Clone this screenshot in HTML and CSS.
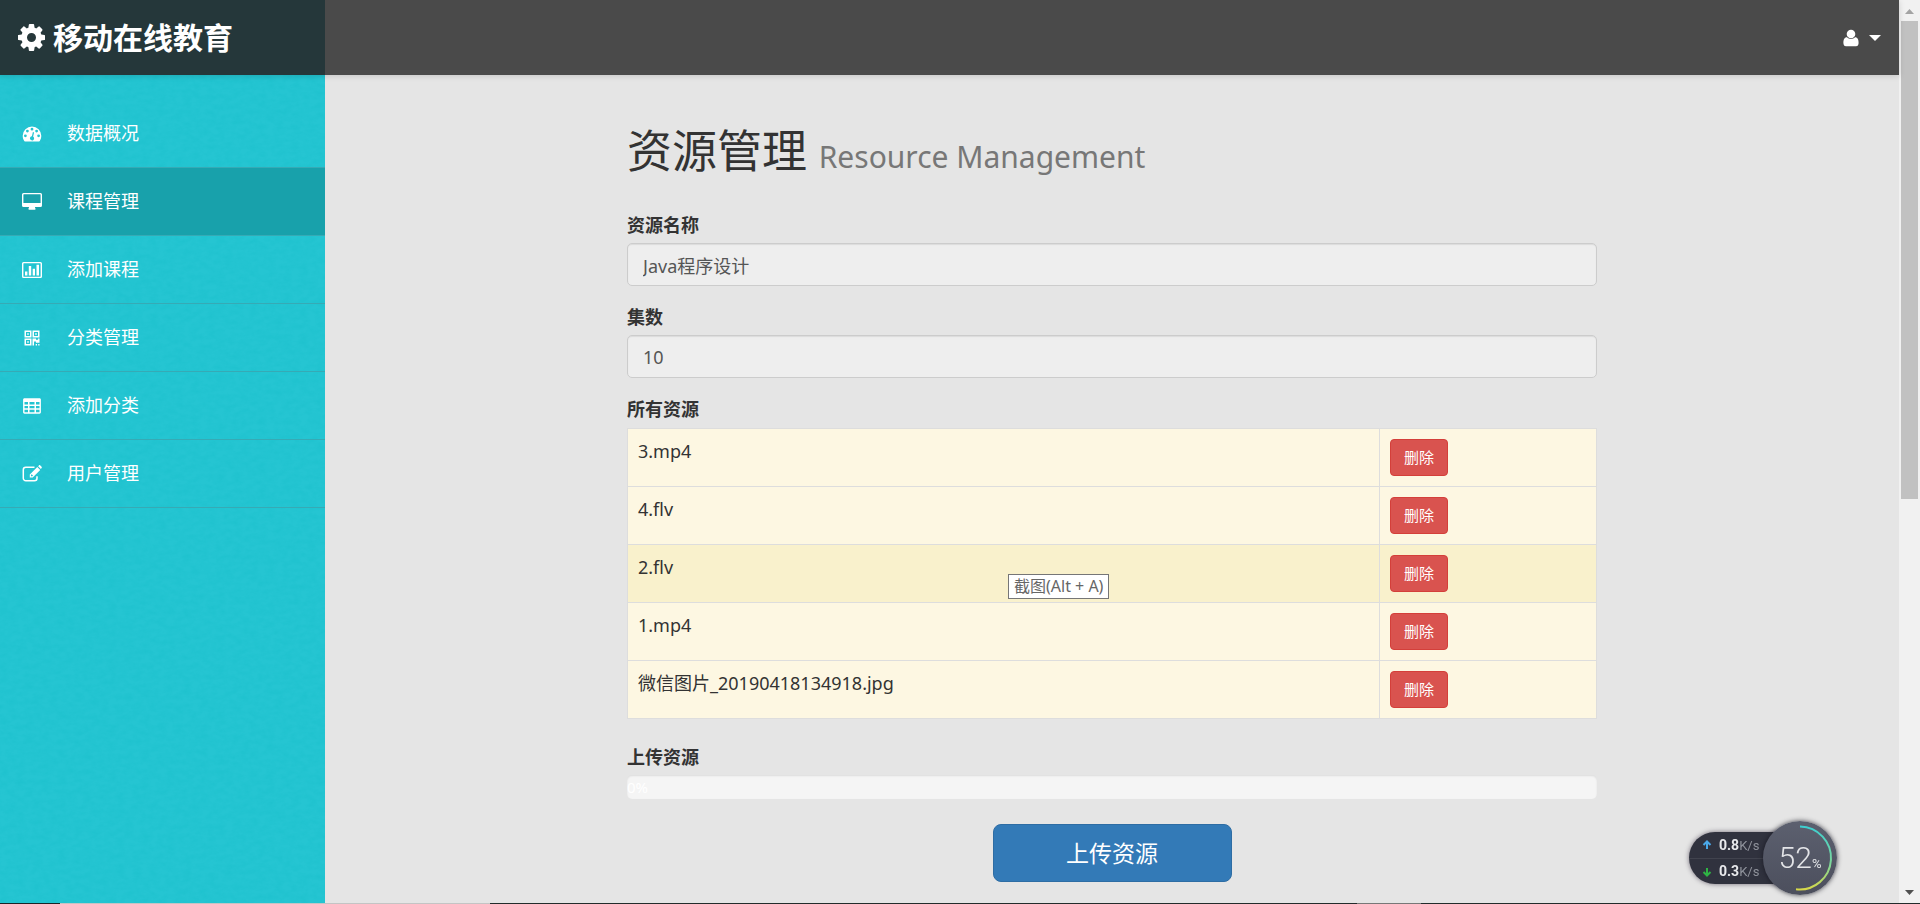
FILE: index.html
```html
<!DOCTYPE html>
<html lang="zh-CN">
<head>
<meta charset="utf-8">
<title>资源管理</title>
<link rel="stylesheet" href="styles.css">
</head>
<body>
<div class="window">
  <div class="app">
    <header class="topbar">
      <a class="brand" href="#">
        <svg class="brand-icon" viewBox="0 0 1536 1536" aria-hidden="true"><path transform="translate(0 -128)" d="M1024 896q0-106-75-181t-181-75-181 75-75 181 75 181 181 75 181-75 75-181zm512-109v222q0 12-8 23t-20 13l-185 28q-19 54-39 91 35 50 107 138 10 12 10 25t-9 23q-27 37-99 108t-94 71q-12 0-26-9l-138-108q-44 23-91 38-16 136-29 186-7 28-36 28h-222q-14 0-24.500-8.500t-11.500-21.500l-28-184q-49-16-90-37l-141 107q-10 9-25 9-14 0-25-11-126-114-165-168-7-10-7-23 0-12 8-23 15-21 51-66.500t54-70.500q-27-50-41-99l-183-27q-13-2-21-12.500t-8-23.500v-222q0-12 8-23t19-13l186-28q14-46 39-92-40-57-107-138-10-12-10-24 0-10 9-23 26-36 98.500-107.500t94.500-71.500q13 0 26 10l138 107q44-23 91-38 16-136 29-186 7-28 36-28h222q14 0 24.500 8.500t11.500 21.500l28 184q49 16 90 37l142-107q9-9 24-9 13 0 25 10 129 119 165 170 7 8 7 22 0 12-8 23-15 21-51 66.500t-54 70.500q26 50 41 98l183 28q13 2 21 12.500t8 23.500z"/></svg>
        <span>移动在线教育</span>
      </a>
      <button class="user-menu" type="button" aria-label="用户菜单">
        <svg class="user-icon" viewBox="0 0 16 18" aria-hidden="true"><circle cx="8" cy="5" r="4.300"/><path d="M4 8.300C1.200 8.300.400 11 .400 14c0 2 1 3.300 2.600 3.300h10c1.600 0 2.600-1.300 2.600-3.300 0-3-.800-5.700-3.600-5.700-1 1-2.400 1.700-4 1.700s-3-.700-4-1.700z"/></svg>
        <svg class="caret" viewBox="0 0 12 6" aria-hidden="true"><path d="M0 0h12L6 6z"/></svg>
      </button>
    </header>
    <div class="body">
      <nav class="sidebar">
        <svg class="texture" aria-hidden="true"><filter id="grain" x="0" y="0" width="100%" height="100%"><feTurbulence type="fractalNoise" baseFrequency="0.12 0.2" numOctaves="3" seed="4"/><feColorMatrix values="0 0 0 0 0  0 0 0 0 .45  0 0 0 0 .5  .9 0 0 0 -.3"/></filter><rect width="100%" height="100%" filter="url(#grain)"/></svg>
        <ul class="menu">
          <li><a class="item" href="#"><svg class="icon" viewBox="0 0 20 20"><path fill-rule="evenodd" d="M10 2.500A9.300 9.300 0 0 0 .700 11.800c0 1.900.500 3.500 1.400 5 .200.400.500.600.900.600h14c.400 0 .700-.200.900-.600.900-1.500 1.400-3.100 1.400-5A9.300 9.300 0 0 0 10 2.500zM10 3.800a1.400 1.400 0 1 1 0 2.800 1.400 1.400 0 0 1 0-2.800zM5.400 5.700a1.400 1.400 0 1 1 0 2.800 1.400 1.400 0 0 1 0-2.800zM14.600 5.700a1.400 1.400 0 1 1 0 2.800 1.400 1.400 0 0 1 0-2.800zM3.400 10.400a1.400 1.400 0 1 1 0 2.800 1.400 1.400 0 0 1 0-2.800zM16.600 10.400a1.400 1.400 0 1 1 0 2.800 1.400 1.400 0 0 1 0-2.800zM10.900 8.100l1.200.300-1 4.100a2.100 2.100 0 1 1-1.200-.300z"/></svg><span>数据概况</span></a></li>
          <li><a class="item active" href="#" aria-current="page"><svg class="icon" viewBox="0 0 20 20"><path fill-rule="evenodd" d="M1.500 1h17A1.500 1.500 0 0 1 20 2.500v11a1.500 1.500 0 0 1-1.500 1.500H13c0 1 .600 1.500.600 2s-.300.700-.700.700H7.100c-.400 0-.700-.200-.700-.700s.600-1 .600-2H1.500A1.500 1.500 0 0 1 0 13.500v-11A1.500 1.500 0 0 1 1.500 1zm.300 1.300a.400.400 0 0 0-.400.400v8.200h17.200V2.700a.400.400 0 0 0-.400-.400z"/></svg><span>课程管理</span></a></li>
          <li><a class="item" href="#"><svg class="icon" viewBox="0 0 20 20"><path fill-rule="evenodd" d="M1.500 2h17A1.500 1.500 0 0 1 20 3.500v13a1.500 1.500 0 0 1-1.500 1.500h-17A1.500 1.500 0 0 1 0 16.500v-13A1.500 1.500 0 0 1 1.500 2zm.300 1.300a.400.400 0 0 0-.400.400v12.600c0 .200.200.400.400.400h16.400c.200 0 .400-.200.400-.400V3.700a.400.400 0 0 0-.400-.400zM3 11.500h2.400v4H3zM6.800 6h2.400v9.500H6.800zM10.700 8.700H13v6.800h-2.300zM14.500 4.700H17v10.800h-2.500z"/></svg><span>添加课程</span></a></li>
          <li><a class="item" href="#"><svg class="icon" viewBox="0 0 20 20"><path fill-rule="evenodd" d="M2.500 2.500h7v7h-7zM4 4v4h4V4zM5.200 5.200h1.600v1.600H5.200zM10.500 2.500h7v7h-7zM12 4v4h4V4zM13.200 5.200h1.600v1.600h-1.600zM2.500 10.500h7v7h-7zM4 12v4h4v-4zM5.200 13.200h1.600v1.600H5.200zM10.500 10.500H14v1.300h2v-1.300h1.500v4.200H14v-1.300h-2v4.100h-1.500zM13.700 16.100H15v1.400h-1.300zM16.200 16.100h1.300v1.400h-1.300z"/></svg><span>分类管理</span></a></li>
          <li><a class="item" href="#"><svg class="icon" viewBox="0 0 20 20"><path fill-rule="evenodd" d="M2.500 2.300h15c.800 0 1.400.600 1.400 1.400v12.600c0 .800-.600 1.400-1.400 1.400h-15c-.800 0-1.400-.600-1.400-1.400V3.700c0-.800.600-1.400 1.400-1.400zM2.500 6v2.500H6V6zM7.500 6v2.500h5V6zM14 6v2.500h3.500V6zM2.500 9.900v2.400H6V9.900zM7.500 9.900v2.400h5V9.900zM14 9.900v2.400h3.500V9.900zM2.500 13.700v2.500H6v-2.500zM7.500 13.700v2.500h5v-2.500zM14 13.700v2.500h3.500v-2.500z"/></svg><span>添加分类</span></a></li>
          <li><a class="item" href="#"><svg class="icon" viewBox="0 0 20 20"><path fill="none" stroke="currentColor" stroke-width="1.500" d="M12.500 3.300H3.800A2.500 2.500 0 0 0 1.300 5.800v8.400a2.500 2.500 0 0 0 2.500 2.500h8.700a2.500 2.500 0 0 0 2.500-2.500v-2"/><path fill-rule="evenodd" d="M15.300 3l2.900 2.900-7.500 7.500H7.800v-2.900zM9 11v1.300h1.300l.700-.700L9.700 10.300zM16.100 2.200l.800-.800c.400-.400 1-.400 1.400 0l1.300 1.300c.400.400.400 1 0 1.400l-.700.800z"/></svg><span>用户管理</span></a></li>
        </ul>
      </nav>
      <main class="content">
        <form class="panel">
          <h1 class="title">资源管理 <small>Resource Management</small></h1>
          <div class="field">
            <label for="name">资源名称</label>
            <input id="name" class="control" type="text" value="Java程序设计" readonly>
          </div>
          <div class="field">
            <label for="count">集数</label>
            <input id="count" class="control" type="text" value="10" readonly>
          </div>
          <div class="field files">
            <span class="caption" id="files-label">所有资源</span>
            <table class="table" aria-labelledby="files-label">
              <tbody>
                <tr><td>3.mp4</td><td class="action"><button class="delete" type="button">删除</button></td></tr>
                <tr><td>4.flv</td><td class="action"><button class="delete" type="button">删除</button></td></tr>
                <tr class="hovered"><td>2.flv</td><td class="action"><button class="delete" type="button">删除</button></td></tr>
                <tr><td>1.mp4</td><td class="action"><button class="delete" type="button">删除</button></td></tr>
                <tr><td>微信图片_20190418134918.jpg</td><td class="action"><button class="delete" type="button">删除</button></td></tr>
              </tbody>
            </table>
          </div>
          <div class="field upload">
            <span class="caption" id="upload-label">上传资源</span>
            <div class="progress" role="progressbar" aria-valuenow="0" aria-valuemin="0" aria-valuemax="100" aria-labelledby="upload-label">0%</div>
          </div>
          <button class="submit" type="button">上传资源</button>
        </form>
      </main>
    </div>
  </div>
  <div class="scrollbar" aria-hidden="true">
    <svg class="arrow" viewBox="0 0 21 21"><path fill="#a3a3a3" d="M6 14l4.500-5L15 14z"/></svg>
    <div class="track"><div class="thumb"></div></div>
    <svg class="arrow" viewBox="0 0 21 21"><path fill="#505050" d="M6 7h9l-4.500 5z"/></svg>
  </div>
</div>
<div class="tooltip" role="tooltip">截图(Alt + A)</div>
<div class="monitor">
  <div class="rates">
    <div class="rate"><svg class="rate-icon up" viewBox="0 0 10 10"><path d="M5 1v8M1.500 5L5 1.500 8.500 5"/></svg><b>0.8</b><span>K/s</span></div>
    <div class="rate"><svg class="rate-icon down" viewBox="0 0 10 10"><path d="M5 1v8M1.500 5L5 8.500 8.500 5"/></svg><b>0.3</b><span>K/s</span></div>
  </div>
  <div class="gauge">
    <svg class="ring" viewBox="0 0 74 74" aria-hidden="true"><defs><linearGradient id="arc" x1="0" y1="0" x2="0" y2="1"><stop offset="0" stop-color="#3dcfd0"/><stop offset=".6" stop-color="#7fd79a"/><stop offset="1" stop-color="#d6d84a"/></linearGradient></defs><path fill="none" stroke="url(#arc)" stroke-width="2" d="M37 5.500a31.500 31.500 0 1 1-4 62.800"/></svg>
    <span class="value">52</span><span class="percent">%</span>
  </div>
</div>
<div class="edge" aria-hidden="true"></div>
</body>
</html>
```
FILE: styles.css
```css
* {
  box-sizing: border-box;
}

body {
  margin: 0;
  overflow: hidden;
  background: #e5e5e5;
  color: #333;
  font-family: "Noto Sans", "Noto Sans CJK SC", sans-serif;
  font-size: 18px;
  line-height: 25px;
}

button,
input {
  font: inherit;
}

.window {
  display: flex;
  height: 100vh;
}

.app {
  flex: 1;
  display: flex;
  flex-direction: column;
  min-width: 0;
}

.topbar {
  display: flex;
  justify-content: space-between;
  height: 75px;
  flex: none;
  background: #4a4a4a;
  box-shadow: 0 1px 6px rgba(0, 0, 0, 0.15);
  z-index: 1;
}

.brand {
  display: flex;
  align-items: center;
  gap: 8px;
  width: 325px;
  padding-left: 18px;
  background: #25373a;
  color: #fff;
  font-size: 30px;
  font-weight: bold;
  line-height: 40px;
  text-decoration: none;
}

.brand-icon {
  width: 27px;
  height: 27px;
  fill: #fff;
}

.user-menu {
  display: flex;
  align-items: center;
  gap: 10px;
  padding: 0 18px;
  border: 0;
  background: none;
}

.user-icon {
  width: 16px;
  height: 18px;
  fill: #fff;
}

.caret {
  width: 12px;
  height: 6px;
  fill: #fff;
}

.body {
  flex: 1;
  display: flex;
  min-height: 0;
}

.sidebar {
  position: relative;
  flex: none;
  width: 325px;
  padding-top: 25px;
  background: #25c5d2;
}

.texture {
  position: absolute;
  top: 0;
  left: 0;
  width: 100%;
  height: 100%;
  opacity: 0.3;
}

.menu {
  position: relative;
  margin: 0;
  padding: 0;
  list-style: none;
}

.item {
  display: flex;
  align-items: center;
  gap: 25px;
  height: 68px;
  padding-left: 22px;
  border-bottom: 1px solid #36aab5;
  color: #fff;
  text-decoration: none;
}

.item.active {
  background: #18a1ab;
}

.icon {
  width: 20px;
  height: 20px;
  fill: currentColor;
}

.content {
  flex: 1;
  padding: 51px 20px 0;
}

.panel {
  display: flex;
  flex-direction: column;
  max-width: 970px;
  margin: 0 auto;
}

.title {
  margin: 0 0 30px;
  font-size: 45px;
  font-weight: normal;
  line-height: 50px;
}

.title small {
  color: #777;
  font-size: 30px;
}

.field {
  display: flex;
  flex-direction: column;
  gap: 5px;
  margin-bottom: 18px;
}

.field label,
.caption {
  font-weight: bold;
  line-height: 26px;
}

.control {
  width: 100%;
  height: 43px;
  padding: 0 15px;
  border: 1px solid #ccc;
  border-radius: 5px;
  outline: 0;
  background: #eee;
  box-shadow: inset 0 1px 1px rgba(0, 0, 0, 0.08);
  color: #555;
}

.files {
  gap: 6px;
  margin-bottom: 25px;
}

.table {
  width: 100%;
  border-collapse: collapse;
  background: #fdf7e2;
}

.table td {
  padding: 10px;
  border: 1px solid #ddd;
  vertical-align: top;
}

.table .action {
  width: 217px;
}

.table .hovered {
  background: #f9f1cc;
}

.delete {
  display: block;
  height: 37px;
  padding: 0 13px;
  border: 1px solid #d43f3a;
  border-radius: 4px;
  background: #d9534f;
  color: #fff;
  font-size: 15px;
}

.upload {
  margin-bottom: 25px;
}

.progress {
  height: 24px;
  border-radius: 5px;
  background: #f5f5f5;
  box-shadow: inset 0 1px 2px rgba(0, 0, 0, 0.1);
  color: #fff;
  font-size: 15px;
  line-height: 24px;
}

.submit {
  align-self: center;
  width: 239px;
  height: 58px;
  border: 1px solid #2e6da4;
  border-radius: 8px;
  background: #337ab7;
  color: #fff;
  font-size: 23px;
}

.scrollbar {
  flex: none;
  display: flex;
  flex-direction: column;
  width: 21px;
  background: #f1f1f1;
}

.arrow {
  width: 21px;
  height: 21px;
}

.track {
  flex: 1;
  padding: 0 2px;
}

.thumb {
  height: 55.5%;
  background: #c1c1c1;
}

.tooltip {
  position: absolute;
  top: 574px;
  left: 1008px;
  padding: 0 5px;
  border: 1px solid #767676;
  background: #fff;
  color: #666;
  font-size: 16px;
  line-height: 23px;
}

.monitor {
  position: fixed;
  right: 83px;
  bottom: 9px;
  display: flex;
  align-items: center;
  font-family: Roboto, sans-serif;
}

.rates {
  width: 100px;
  height: 52px;
  margin-right: -26px;
  border-radius: 26px 0 0 26px;
  background: #30323e;
  box-shadow: 0 0 5px rgba(40, 30, 50, 0.6);
}

.rate {
  display: flex;
  align-items: center;
  height: 26px;
  padding-left: 13px;
  color: #8f929b;
  font-size: 13px;
}

.rate + .rate {
  border-top: 1px solid #41434e;
}

.rate b {
  margin-left: 7px;
  color: #e8e9ec;
  font-size: 14px;
}

.rate-icon {
  width: 10px;
  height: 10px;
  fill: none;
  stroke-width: 2;
}

.up {
  stroke: #4aa8e8;
}

.down {
  stroke: #2fb344;
}

.gauge {
  position: relative;
  display: flex;
  align-items: baseline;
  justify-content: center;
  width: 74px;
  height: 74px;
  border-radius: 50%;
  background: linear-gradient(#5c606f, #4c4f5d);
  box-shadow: 0 0 5px rgba(20, 20, 30, 0.8);
  color: #e4e5e8;
  line-height: 74px;
}

.ring {
  position: absolute;
  top: 0;
  left: 0;
  width: 100%;
  height: 100%;
}

.value {
  font-size: 30px;
  font-weight: 300;
}

.percent {
  font-size: 13px;
}

.edge {
  position: fixed;
  right: 0;
  bottom: 0;
  left: 0;
  height: 1px;
  background: linear-gradient(90deg, #1b2526 3.1%, #c4c4c4 3.1% 25.5%, #222b2b 25.5% 70.7%, #777 70.7% 74%, #222b2b 74%);
}
```
